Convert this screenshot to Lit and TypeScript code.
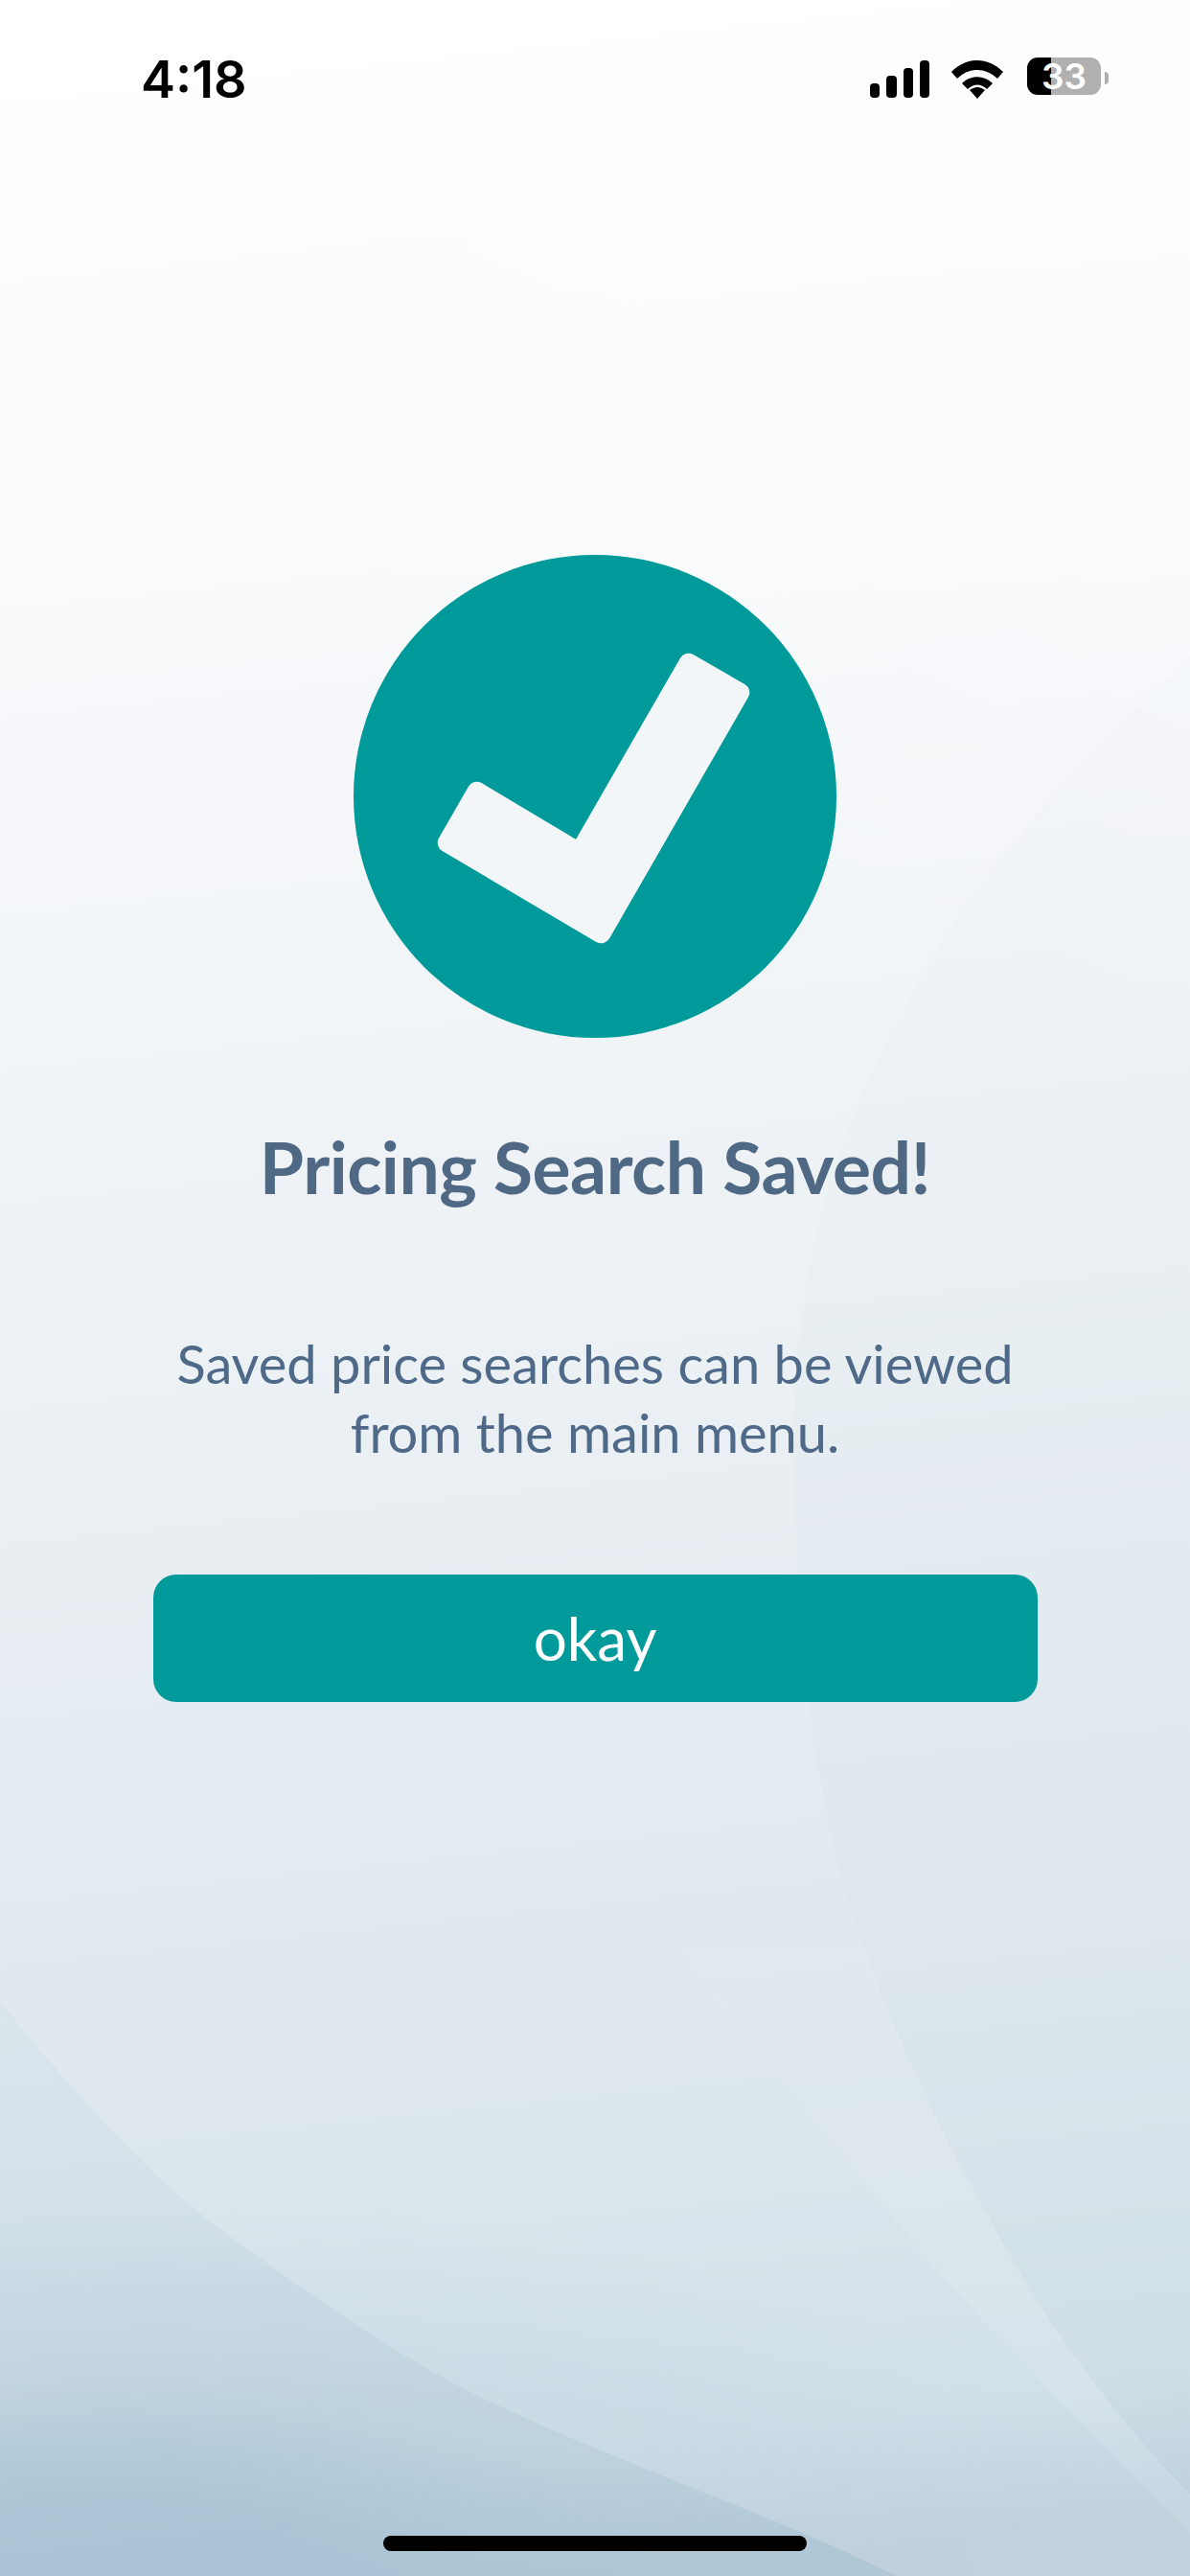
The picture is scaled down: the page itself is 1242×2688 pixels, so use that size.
import { LitElement, html, css, svg } from 'lit';
import { customElement } from 'lit/decorators.js';

@customElement('app-root')
export class AppRoot extends LitElement {
  static styles = css`
    :host {
      display: block;
      width: 1242px;
    }

    .screen {
      position: relative;
      width: 1242px;
      height: 2688px;
      overflow: hidden;
      display: flex;
      flex-direction: column;
      align-items: center;
      font-family: Lato, 'Noto Sans', sans-serif;
      background:
        radial-gradient(ellipse 1100px 400px at 100px 2688px, rgba(165, 192, 210, 0.78) 0%, rgba(165, 192, 210, 0.78) 20%, rgba(165, 192, 210, 0.3) 50%, rgba(165, 192, 210, 0) 100%),
        linear-gradient(205deg, rgba(255, 255, 255, 0.5) 0%, rgba(255, 255, 255, 0) 35%),
        linear-gradient(174deg, #ffffff 2.3%, rgb(247, 249, 251) 23.6%, rgb(239, 243, 246) 37.8%, rgb(222, 231, 238) 69.7%, rgb(210, 224, 232) 83.9%, rgb(199, 217, 227) 92.8%, rgb(178, 200, 214) 97.7%);
    }

    .swoosh {
      position: absolute;
      top: 0;
      left: 0;
      pointer-events: none;
    }

    .status {
      position: relative;
      box-sizing: border-box;
      width: 100%;
      height: 579px;
      flex: none;
    }

    .status-row {
      display: flex;
      justify-content: space-between;
      align-items: flex-start;
      padding: 58px 93px 0 147px;
    }

    .time {
      font-family: Inter, sans-serif;
      font-size: 54px;
      font-weight: 600;
      line-height: 50px;
      color: #000;
    }

    .status-icons {
      display: flex;
      gap: 22px;
      margin-top: 2px;
    }

    .status-icons svg {
      display: block;
    }

    .battery {
      position: relative;
      width: 77px;
      height: 39px;
      border-radius: 11px;
      background: linear-gradient(90deg, #000 25px, #b0b0b0 25px);
      color: #fff;
      font-family: Inter, sans-serif;
      font-size: 37px;
      font-weight: 600;
      line-height: 39px;
      text-align: center;
    }

    .battery::after {
      content: '';
      position: absolute;
      left: 81px;
      top: 15px;
      width: 4px;
      height: 13px;
      border-radius: 0 7px 7px 0;
      background: #b0b0b0;
    }

    .content {
      position: relative;
      display: flex;
      flex-direction: column;
      align-items: center;
      width: 100%;
    }

    .badge {
      display: block;
      width: 504px;
      height: 504px;
    }

    h1 {
      margin: 89px 0 0;
      font-size: 75px;
      letter-spacing: -0.5px;
      line-height: 90px;
      font-weight: 700;
      color: #4f6884;
    }

    p {
      margin: 125px 0 0;
      width: 923px;
      text-align: center;
      font-size: 56px;
      line-height: 72px;
      color: #4f6a88;
    }

    button {
      box-sizing: border-box;
      display: block;
      width: 923px;
      height: 133px;
      margin-top: 112px;
      border: 0;
      border-radius: 24px;
      background: #009a9a;
      color: #fff;
      font-family: inherit;
      font-size: 62px;
      line-height: 133px;
      padding: 0;
    }

    .home-bar {
      position: absolute;
      left: 400px;
      top: 2646px;
      width: 442px;
      height: 16px;
      border-radius: 8px;
      background: #000;
    }
  `;

  // faint background shapes: the big sweep, the darker right side, the crescent
  private renderSwooshes() {
    return svg`
      <svg class="swoosh" width="1242" height="2688" viewBox="0 0 1242 2688">
        <defs>
          <linearGradient id="crescent" x1="0" y1="1950" x2="0" y2="2300" gradientUnits="userSpaceOnUse">
            <stop offset="0" stop-color="#fff" stop-opacity="0" />
            <stop offset="1" stop-color="#fff" stop-opacity="0.1" />
          </linearGradient>
        </defs>
        <path fill="#fff" fill-opacity="0.18"
          d="M0 2089 C70 2175 150 2265 223 2321 C310 2385 400 2450 491 2496 C640 2570 800 2620 935 2688 L1242 2688 L1242 0 L0 0 Z" />
        <path fill="rgb(90,120,140)" fill-opacity="0.015"
          d="M1242 685 C1120 800 1000 930 928 1082 C880 1180 838 1290 830 1450 C826 1600 835 1760 864 1900 C890 2030 960 2190 1062 2367 C1110 2450 1180 2540 1242 2603 Z" />
        <path fill="url(#crescent)"
          d="M864 1900 C890 2030 960 2190 1062 2367 C1110 2450 1180 2540 1242 2603 L1242 2644 C1170 2570 1030 2430 951 2337 C880 2250 780 2130 697 2015 Z" />
      </svg>
    `;
  }

  render() {
    return html`
      <div class="screen">
        ${this.renderSwooshes()}
        <div class="status">
          <div class="status-row">
            <span class="time">4:18</span>
            <div class="status-icons">
              <svg width="143" height="44" viewBox="907 60 143 44">
                <rect x="908" y="87" width="10" height="15" rx="4" />
                <rect x="925" y="79" width="11" height="23" rx="4" />
                <rect x="943" y="71" width="10" height="31" rx="4" />
                <rect x="960" y="63" width="10" height="39" rx="4" />
                <path d="M993 75 C1009 59 1031 59 1047 75 L1041 82 C1028 70 1012 70 999 82 Z" />
                <path d="M1004 87 C1013 78 1027 78 1036 87 L1030 93 C1024 87 1016 87 1010 93 Z" />
                <path d="M1012 94 C1017 90 1023 90 1028 94 L1020 103 Z" />
              </svg>
              <div class="battery">33</div>
            </div>
          </div>
        </div>
        <div class="content">
          <svg class="badge" viewBox="369 579 504 504">
            <circle cx="621" cy="831" r="252" fill="#009a9a" />
            <path
              d="M718.6 691.7 L772.3 722.6 L627.4 974.3 L466.7 879.4 L497.6 825.7 L604.6 889.7 Z"
              fill="#f3f6f9" stroke="#f3f6f9" stroke-width="20" stroke-linejoin="round" />
          </svg>
          <h1>Pricing Search Saved!</h1>
          <p>Saved price searches can be viewed<br />from the main menu.</p>
          <button>okay</button>
        </div>
        <div class="home-bar"></div>
      </div>
    `;
  }
}
